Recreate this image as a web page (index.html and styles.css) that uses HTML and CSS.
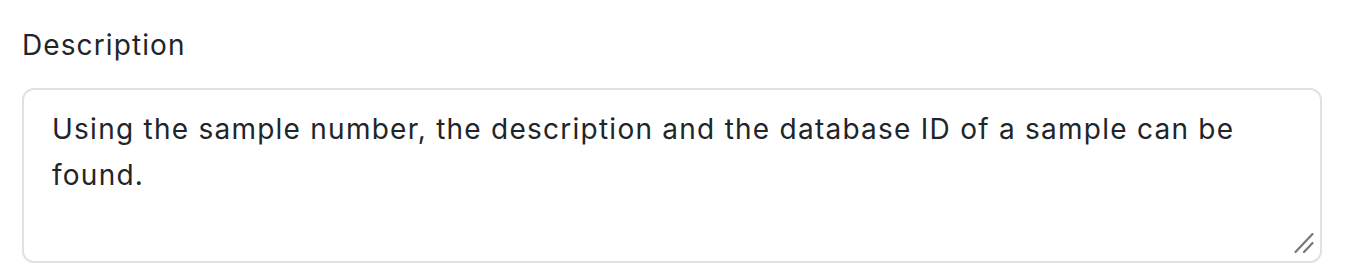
FILE: index.html
```
<!DOCTYPE html>
<html lang="en">
<head>
  <meta charset="UTF-8" />
  <title>Description</title>
  <link rel="stylesheet" href="styles.css">
</head>
<body>
  <div class="field">
    <label class="field-label" for="description">Description</label>
    <div class="input-wrap">
      <textarea id="description" class="field-input">Using the sample number, the description and the database ID of a sample can be found.</textarea>
      <svg class="grip" width="20" height="20" viewBox="0 0 20 20">
        <path d="M18.5 1 L1.5 19 M18.5 10 L10 19" stroke="#777" stroke-width="2.2" stroke-linecap="round" fill="none"/>
      </svg>
    </div>
  </div>
</body>
</html>
```

FILE: styles.css
```
body {
  margin: 0;
  font-family: Inter, "Liberation Sans", Arial, sans-serif;
  color: #212529;
  background: #fff;
}
.field {
  padding: 25px 24px 0 22px;
}
.field-label {
  display: block;
  font-size: 28px;
  line-height: 40px;
  letter-spacing: 1.1px;
  margin-bottom: 23px;
}
.input-wrap {
  position: relative;
}
.field-input {
  display: block;
  box-sizing: border-box;
  width: 100%;
  height: 175px;
  padding: 16px 28px 14px;
  font-family: inherit;
  font-size: 28px;
  line-height: 46px;
  letter-spacing: 1.25px;
  color: #212529;
  background: #fff;
  border: 2px solid #dee2e6;
  border-radius: 12px;
  resize: none;
  outline: none;
}
.grip {
  position: absolute;
  right: 8px;
  bottom: 10px;
  pointer-events: none;
}
```
